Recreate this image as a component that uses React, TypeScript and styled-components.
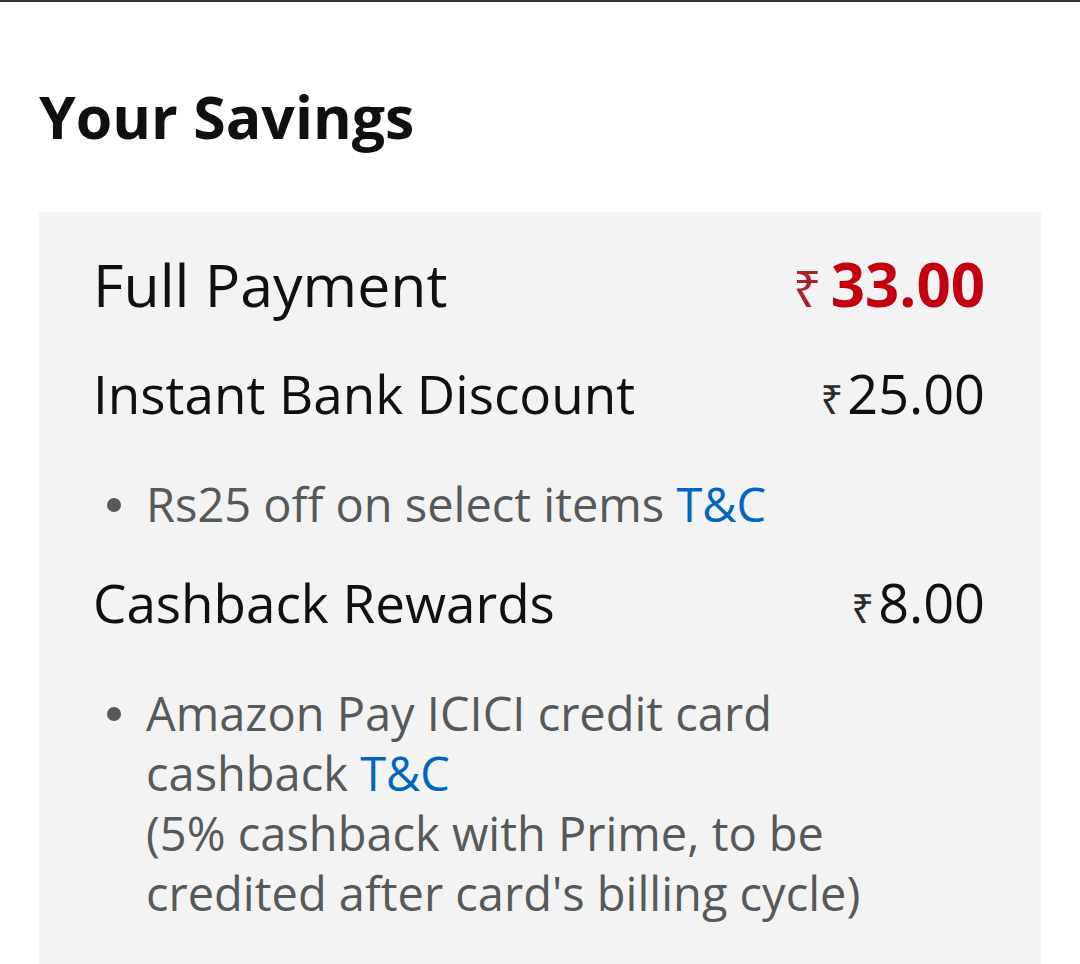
import React, { FC } from 'react';
import styled, { createGlobalStyle } from 'styled-components';

const GlobalStyle = createGlobalStyle`
    html, body {
        margin: 0;
        padding: 0;
        background: #ffffff;
    }
    body {
        font-family: 'Open Sans', 'Noto Sans', sans-serif;
        color: #0f1111;
    }
`;

type Bullet = { text: string; note?: string };
type Saving = { label: string; amount: string; bullet: Bullet };

const savings: Saving[] = [
    {
        label: 'Instant Bank Discount',
        amount: '25.00',
        bullet: { text: 'Rs25 off on select items' },
    },
    {
        label: 'Cashback Rewards',
        amount: '8.00',
        bullet: {
            text: 'Amazon Pay ICICI credit card cashback',
            note: "(5% cashback with Prime, to be credited after card's billing cycle)",
        },
    },
];

const App: FC = () => (
    <>
        <GlobalStyle />
        <Page>
            <Title>Your Savings</Title>
            <Panel>
                <Row>
                    <TotalLabel>Full Payment</TotalLabel>
                    <Amount $total>
                        <Rupee $total>₹</Rupee>33.00
                    </Amount>
                </Row>
                {savings.map(s => (
                    <Group key={s.label}>
                        <Row>
                            <Label>{s.label}</Label>
                            <Amount>
                                <Rupee>₹</Rupee>
                                {s.amount}
                            </Amount>
                        </Row>
                        <BulletItem>
                            <Dot />
                            <BulletText>
                                <Line>
                                    {s.bullet.text} <Link>T&amp;C</Link>
                                </Line>
                                {s.bullet.note && <Line>{s.bullet.note}</Line>}
                            </BulletText>
                        </BulletItem>
                    </Group>
                ))}
            </Panel>
        </Page>
    </>
);

export default App;

const Page = styled.div`
    border-top: 2px solid #333333;
    min-height: 962px;
    padding: 0 39px;
    overflow: hidden;
`;

const Title = styled.h1`
    margin: 74px 0 0 0;
    font-size: 59px;
    line-height: 80px;
    font-weight: 700;
    color: #0f1111;
`;

const Panel = styled.section`
    margin-top: 56px;
    background: #f3f3f3;
    min-height: 752px;
    padding: 31px 56px 0 54px;
    box-sizing: border-box;
`;

const Group = styled.div`
    display: flex;
    flex-direction: column;
`;

const Row = styled.div`
    display: flex;
    justify-content: space-between;
    align-items: baseline;
`;

const TotalLabel = styled.span`
    font-size: 59px;
    line-height: 76px;
    color: #0f1111;
`;

const Label = styled.span`
    font-size: 53px;
    line-height: 76px;
    margin-top: 31px;
    color: #0f1111;
`;

const Amount = styled.span<{ $total?: boolean }>`
    font-size: ${p => (p.$total ? '60px' : '54px')};
    font-weight: ${p => (p.$total ? 700 : 400)};
    color: ${p => (p.$total ? '#c40010' : '#0f1111')};
    display: inline-flex;
    align-items: baseline;
`;

const Rupee = styled.span<{ $total?: boolean }>`
    font-family: 'Noto Sans', sans-serif;
    font-weight: 400;
    font-size: ${p => (p.$total ? '50px' : '40px')};
    line-height: 1;
    margin-right: ${p => (p.$total ? '9px' : '4px')};
    color: ${p => (p.$total ? '#a8242a' : '#2a2a2a')};
`;

const BulletItem = styled.div`
    display: flex;
    align-items: flex-start;
    margin-top: 42px;
    color: #565959;
`;

const Dot = styled.span`
    flex: none;
    width: 14px;
    height: 14px;
    border-radius: 50%;
    background: #565959;
    margin: 24px 25px 0 14px;
`;

const BulletText = styled.div`
    display: flex;
    flex-direction: column;
    font-size: 47px;
    line-height: 60px;
`;

const Line = styled.div`
    line-height: 60px;
`;

const Link = styled.span`
    color: #0066c0;
`;
